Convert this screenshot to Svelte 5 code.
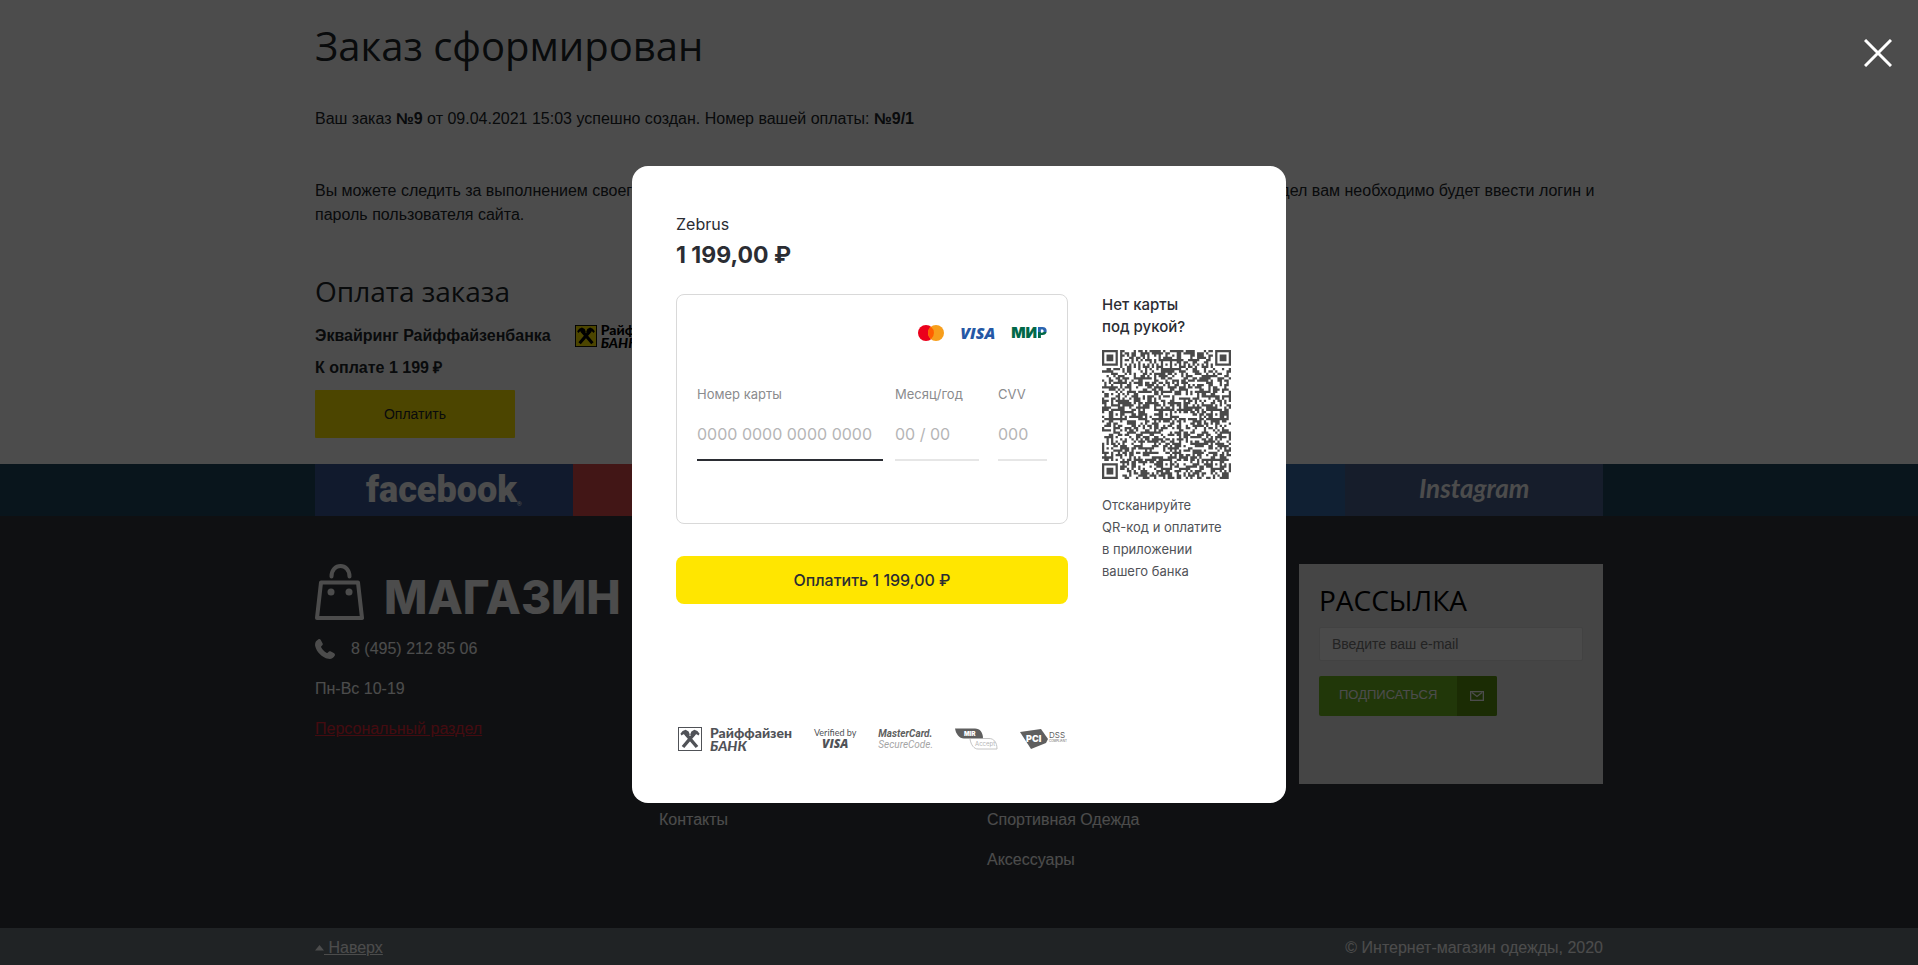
<script lang="ts">
    const socials = [
        { id: "facebook", label: "facebook", color: "#3b5998" },
        { id: "google", label: "", color: "#dd4b4b" },
        { id: "twitter", label: "", color: "#2caae1" },
        { id: "vk", label: "", color: "#366bac" },
        { id: "instagram", label: "Instagram", color: "#4b628f" },
    ];

    const amount = "1\u00a0199,00\u00a0₽";

    let email: string = "";
    let cardNumber: string = "";
    let expiry: string = "";
    let cvv: string = "";
    let open: boolean = true;

    const SIZE = 57; // modules on each side of the QR code

    // Distance from a centre, counted in square rings
    function ring(x: number, y: number, cx: number, cy: number): number {
        return Math.max(Math.abs(x - cx), Math.abs(y - cy));
    }

    function isDark(x: number, y: number, noise: number): boolean {
        const finders = [[3, 3], [SIZE - 4, 3], [3, SIZE - 4]];
        for (const [cx, cy] of finders) {
            const d = ring(x, y, cx, cy);
            if (d <= 4) return d !== 2 && d !== 4;
        }
        for (const cx of [6, 28, 50]) {
            for (const cy of [6, 28, 50]) {
                if (cx !== 28 && cy !== 28 && cx + cy !== 100) continue;
                const d = ring(x, y, cx, cy);
                if (d <= 2) return d !== 1;
            }
        }
        if (x === 6 || y === 6) return (x + y) % 2 === 0; // Timing lines
        return noise > 0.48;
    }

    function buildQr(): string {
        let seed = 20219;
        let path = "";
        for (let y = 0; y < SIZE; y++) {
            for (let x = 0; x < SIZE; x++) {
                seed = (seed * 16807) % 2147483647;
                if (isDark(x, y, seed / 2147483647)) path += `M${x} ${y}h1v1h-1z`;
            }
        }
        return path;
    }

    const qrPath = buildQr();
</script>

{#snippet bankSign(back: string, ink: string)}
    <svg class="bank-sign" viewBox="0 0 24 24" aria-hidden="true">
        <rect x="0.5" y="0.5" width="23" height="23" fill={back} stroke={ink} />
        <path d="M5 20 16.6 6.4M19 20 7.4 6.4" stroke={ink} stroke-width="3.4" fill="none" />
        <path d="M2.4 6.8 4.6 4l3-1.2 3 1.6 1.2 3.2-2.4 3-2.6-3.2-1.5-.2-1.7 1.4zM21.6 6.8 19.4 4l-3-1.2-3 1.6-1.2 3.2 2.4 3 2.6-3.2 1.5-.2 1.7 1.4z" fill={ink} />
    </svg>
{/snippet}

<div class="page">
    <main class="container order">
        <h1>Заказ сформирован</h1>
        <p>Ваш заказ <b>№9</b> от 09.04.2021 15:03 успешно создан. Номер вашей оплаты: <b>№9/1</b></p>
        <p class="note">
            Вы можете следить за выполнением своего заказа в Персональном разделе сайта. Обратите внимание, что для входа
            в этот раздел вам необходимо будет ввести логин и пароль пользователя сайта.
        </p>
        <h2>Оплата заказа</h2>
        <div class="method">
            <b>Эквайринг Райффайзенбанка</b>
            <span class="bank">
                {@render bankSign("#fee600", "#000")}
                <span class="bank-name">Райффайзен<br /><i>БАНК</i></span>
            </span>
        </div>
        <b class="total">К оплате 1 199 ₽</b>
        <button class="pay-open" on:click={() => (open = true)}>Оплатить</button>
    </main>

    <nav class="socials">
        <div class="container social-row">
            {#each socials as social}
                <a href="#{social.id}" class="social {social.id}" style="background: {social.color}" aria-label={social.id}>
                    {social.label}{#if social.id === "facebook"}<small>®</small>{/if}
                </a>
            {/each}
        </div>
    </nav>

    <footer>
        <div class="container footer-grid">
            <div class="contacts">
                <a class="logo" href="#home">
                    <svg viewBox="0 0 49 56" width="49" height="56" fill="none" stroke="#fff" stroke-width="4" aria-hidden="true">
                        <path d="M6 18.5h37l4 35.5H2z" stroke-linejoin="round" />
                        <path d="M16.500 12.500c0-14 18-14 18 0" stroke-linecap="round" />
                        <circle cx="16" cy="28" r="3.500" fill="#fff" stroke="none" />
                        <circle cx="34" cy="28" r="3.500" fill="#fff" stroke="none" />
                    </svg>
                    <span>МАГАЗИН</span>
                </a>
                <div class="phone">
                    <svg viewBox="0 0 20 20" width="20" height="20" fill="#fff" aria-hidden="true">
                        <path d="M3.200.4C4.400-.3 5.200.1 5.900 1.300l1.600 2.900c.6 1.100.3 1.900-.7 2.600-.8.600-.9 1-.4 1.900 1.200 2.100 2.900 3.800 5 5 .8.400 1.300.3 1.800-.5.700-1 1.600-1.300 2.700-.7l2.800 1.600c1.200.7 1.600 1.500 1 2.700-1.200 2.500-3.600 3.500-6.500 3C7 18.500 1.300 12.500.2 6.900-.3 4 .8 1.600 3.200.4z" />
                    </svg>
                    8 (495) 212 85 06
                </div>
                <p>Пн-Вс 10-19</p>
                <a class="personal" href="#personal">Персональный раздел</a>
            </div>
            <ul>
                <li><a href="#contacts">Контакты</a></li>
            </ul>
            <ul>
                <li><a href="#sport">Спортивная Одежда</a></li>
                <li><a href="#accessories">Аксессуары</a></li>
            </ul>
            <form class="mailing" on:submit|preventDefault>
                <h3>РАССЫЛКА</h3>
                <input type="email" placeholder="Введите ваш e-mail" aria-label="E-mail" bind:value={email} />
                <button class="subscribe">
                    <span>ПОДПИСАТЬСЯ</span>
                    <span class="mail">
                        <svg viewBox="0 0 14 10" width="14" height="10" fill="none" stroke="#fff" stroke-width="1.300" aria-hidden="true">
                            <rect x="0.650" y="0.650" width="12.700" height="8.700" />
                            <path d="m2 1.500 5 4 5-4" />
                        </svg>
                    </span>
                </button>
            </form>
        </div>
        <div class="bottom">
            <div class="container bottom-row">
                <a href="#top">
                    <svg viewBox="0 0 9 6" width="9" height="6" aria-hidden="true"><path d="M0 5.500 4.500 0 9 5.500z" fill="#fff" /></svg>&nbsp;Наверх</a>
                <span>© Интернет-магазин одежды, 2020</span>
            </div>
        </div>
    </footer>
</div>

{#if open}
    <div class="overlay">
        <button class="close" aria-label="Закрыть" on:click={() => (open = false)}>
            <svg viewBox="0 0 28 28" width="28" height="28" stroke="#fff" stroke-width="3"><path d="M1 1l26 26M27 1 1 27" /></svg>
        </button>
        <div class="modal" role="dialog" aria-modal="true" aria-label="Zebrus">
            <div class="merchant">Zebrus</div>
            <div class="price">{amount}</div>
            <div class="columns">
                <form class="payment" on:submit|preventDefault>
                    <div class="card">
                        <div class="brands">
                            <svg viewBox="0 0 26 16" width="26" height="16" aria-label="Mastercard">
                                <circle cx="8" cy="8" r="8" fill="#eb001b" />
                                <circle cx="18" cy="8" r="8" fill="#f79e1b" />
                                <path d="M13 1.800a8 8 0 0 1 0 12.400 8 8 0 0 1 0-12.400z" fill="#ff5f00" />
                            </svg>
                            <span class="visa">VISA</span>
                            <span class="mir">МИ<span>Р</span></span>
                        </div>
                        <div class="fields">
                            <label>Номер карты<input class="active" placeholder="0000 0000 0000 0000" bind:value={cardNumber} /></label>
                            <label>Месяц/год<input placeholder="00 / 00" bind:value={expiry} /></label>
                            <label class="cvv">CVV<input placeholder="000" bind:value={cvv} /></label>
                        </div>
                    </div>
                    <button class="pay">Оплатить {amount}</button>
                </form>
                <aside>
                    <h4>Нет карты<br />под рукой?</h4>
                    <svg class="qr" viewBox="0 0 {SIZE} {SIZE}" role="img" aria-label="QR">
                        <path d={qrPath} fill="#4a4a4a" />
                    </svg>
                    <p>Отсканируйте<br />QR-код и оплатите<br />в приложении<br />вашего банка</p>
                </aside>
            </div>
            <div class="partners">
                <span class="bank grey">
                    {@render bankSign("#fff", "#505257")}
                    <span class="bank-name">Райффайзен<br /><i>БАНК</i></span>
                </span>
                <span class="verified">Verified by<b>VISA</b></span>
                <span class="secure"><b>MasterCard.</b>SecureCode.</span>
                <svg viewBox="0 0 43 22" width="43" height="22" aria-label="MIR Accept">
                    <path d="M0 .5h20c5 0 8 4 8 10H9C4 10.500 1 6 0 .5z" fill="#5f5f5f" />
                    <path d="M28 10.500h6c5 0 8 4 8 10.500H23c-4 0-7-4-8-10" fill="none" stroke="#c4c4c4" />
                    <text x="9" y="8" class="mir-mark">MIR</text>
                    <text x="20" y="18" class="mir-accept">Accept</text>
                </svg>
                <svg viewBox="0 0 48 20" width="48" height="20" aria-label="PCI DSS">
                    <path d="M0 3 21 0l7 10-2 4-15 6z" fill="#5f5f5f" />
                    <text x="6" y="13" class="pci">PCI</text>
                    <text x="29" y="9" class="dss">DSS</text>
                    <text x="29" y="13" class="compliant">COMPLIANT</text>
                </svg>
            </div>
        </div>
    </div>
{/if}

<style>
    :global(body) {
        margin: 0;
        background: #fff;
        color: #212529;
        font: 16px/24px "Liberation Sans", Arial, sans-serif;
    }

    h1, h2, h3, h4, p, ul {
        margin: 0;
        padding: 0;
        list-style: none;
    }

    button {
        border: 0;
        padding: 0;
        font-family: inherit;
        cursor: pointer;
    }

    .container {
        box-sizing: border-box;
        width: 100%;
        max-width: 1288px;
        margin: 0 auto;
    }

    /* Order page */
    .order {
        display: flex;
        flex-direction: column;
        align-items: flex-start;
        padding: 16px 0 26px;
    }

    h1, h2, h3 {
        font-family: "Open Sans", sans-serif;
        font-weight: 400;
    }

    h1 {
        margin-bottom: 31px;
        font-size: 40px;
        line-height: 60px;
    }

    h2 {
        margin: 44px 0 13px;
        font-size: 28px;
        line-height: 40px;
    }

    .note {
        margin-top: 48px;
    }

    .method {
        display: flex;
        align-items: center;
        gap: 24px;
        height: 24px;
        margin-bottom: 8px;
    }

    .bank {
        display: flex;
        align-items: center;
        gap: 4px;
        color: #000;
    }

    .bank-sign {
        width: 22px;
        height: 22px;
    }

    .bank-name {
        font: 900 14px/13px Lato, sans-serif;
    }

    .pay-open {
        width: 200px;
        height: 48px;
        margin-top: 10px;
        border-radius: 1px;
        background: #fee600;
        color: #212529;
        font-size: 14px;
    }

    /* Social links */
    .socials {
        background: #1f495f;
    }

    .social-row {
        display: grid;
        grid-template-columns: repeat(5, 1fr);
        height: 52px;
    }

    .social {
        display: flex;
        align-items: center;
        justify-content: center;
        color: #fff;
        text-decoration: none;
    }

    .facebook {
        font: 900 36px/52px Roboto, sans-serif;
    }

    .facebook small {
        align-self: flex-end;
        font: 6px/24px Roboto, sans-serif;
    }

    .instagram {
        font: italic 700 26px/48px Lato, cursive;
        align-items: flex-start;
    }

    /* Footer */
    footer {
        background: #33383d;
        color: #fff;
    }

    .footer-grid {
        display: grid;
        grid-template-columns: 344px 328px 1fr 304px;
        padding: 48px 0;
        height: 412px;
    }

    footer a {
        color: #fff;
        text-decoration: none;
    }

    .logo {
        display: flex;
        align-items: flex-end;
        gap: 20px;
        height: 56px;
        font: 800 46px/46px Inter, sans-serif;
    }

    .phone {
        display: flex;
        gap: 16px;
        height: 24px;
        margin: 17px 0 16px;
        align-items: center;
    }

    .contacts p {
        margin-bottom: 16px;
    }

    .contacts .personal {
        color: #e32636;
        text-decoration: underline;
    }

    footer ul {
        display: flex;
        flex-direction: column;
        gap: 16px;
        padding-top: 244px;
    }

    .mailing {
        box-sizing: border-box;
        height: 220px;
        padding: 16px 20px;
        background: #e6e6e6;
    }

    .mailing h3 {
        color: #000;
        font-size: 28px;
        line-height: 40px;
    }

    .mailing input {
        box-sizing: border-box;
        display: block;
        width: 100%;
        height: 34px;
        margin: 7px 0 15px;
        padding: 0 12px;
        border: 1px solid #dcdcdc;
        border-radius: 2px;
        background: #f8f8f8;
        font: 14px "Liberation Sans", Arial, sans-serif;
    }

    .mailing input::placeholder {
        color: #757575;
    }

    .subscribe {
        display: flex;
        height: 40px;
        border-radius: 2px;
        overflow: hidden;
        background: #70b820;
        color: #fff;
        font-size: 13px;
        line-height: 38px;
    }

    .subscribe span {
        padding: 0 20px;
    }

    .subscribe .mail {
        display: flex;
        align-items: center;
        height: 40px;
        padding: 0 13px;
        background: #5a9410;
    }

    .bottom {
        background: #6c767c;
    }

    .bottom-row {
        display: flex;
        justify-content: space-between;
        padding: 8px 0 5px;
    }

    .bottom-row a {
        text-decoration: underline;
    }

    .bottom-row svg {
        vertical-align: 2px;
    }

    /* Payment window */
    .overlay {
        position: fixed;
        inset: 0;
        display: flex;
        align-items: flex-start;
        justify-content: center;
        padding-top: 166px;
        background: rgba(0, 0, 0, 0.7);
    }

    .close {
        position: absolute;
        top: 39px;
        right: 26px;
        height: 28px;
        background: none;
    }

    .modal {
        box-sizing: border-box;
        width: 654px;
        padding: 46px 44px 50px;
        border-radius: 16px;
        background: #fff;
        color: #2b2d33;
        font-family: Inter, sans-serif;
    }

    .price {
        margin: 3px 0 23px;
        font-size: 23px;
        font-weight: 700;
        line-height: 32px;
    }

    .columns {
        display: grid;
        grid-template-columns: 392px 1fr;
        gap: 34px;
    }

    .card {
        box-sizing: border-box;
        height: 230px;
        padding: 30px 20px;
        border: 1px solid #d9d9d9;
        border-radius: 8px;
    }

    .brands {
        display: flex;
        align-items: center;
        justify-content: flex-end;
        gap: 16px;
        height: 16px;
    }

    .visa {
        color: #2558a5;
        font: italic 800 16px/16px "Open Sans", sans-serif;
    }

    .mir {
        color: #006848;
        font: 900 15px/16px Inter, sans-serif;
    }

    .mir span {
        background: linear-gradient(#2a65b0 50%, #006848 50%);
        background-clip: text;
        color: transparent;
    }

    .fields {
        display: grid;
        grid-template-columns: 186px 84px 1fr;
        gap: 12px;
        margin-top: 43px;
    }

    .fields label {
        color: #8a8b8e;
        font-size: 13px;
        line-height: 20px;
    }

    .fields .cvv {
        width: 49px;
        justify-self: end;
    }

    .fields input {
        box-sizing: border-box;
        display: block;
        width: 100%;
        height: 39px;
        margin-top: 18px;
        padding: 0 0 13px;
        border: 0;
        border-bottom: 2px solid #e6e6e6;
        outline: 0;
        background: none;
        font: 16px Inter, sans-serif;
    }

    .fields .active {
        border-color: #2b2d33;
    }

    .fields input::placeholder {
        color: #b5b5b6;
    }

    .pay {
        width: 100%;
        height: 48px;
        margin-top: 32px;
        border-radius: 8px;
        background: #ffe600;
        color: #2b2d33;
        font-size: 16px;
        font-weight: 500;
    }

    h4 {
        font-size: 15px;
        font-weight: 500;
        line-height: 22px;
    }

    .qr {
        display: block;
        width: 129px;
        height: 129px;
        margin: 12px 0 15px;
    }

    aside p {
        color: #505257;
        font-size: 13px;
        line-height: 22px;
    }

    .partners {
        display: flex;
        align-items: center;
        gap: 22px;
        height: 28px;
        margin-top: 121px;
        padding-left: 2px;
        color: #505257;
    }

    .partners b {
        display: block;
    }

    .grey {
        gap: 8px;
        color: #505257;
    }

    .grey .bank-sign {
        width: 24px;
        height: 24px;
    }

    .verified {
        text-align: center;
        font: 9px/10px Lato, sans-serif;
    }

    .verified b {
        font: italic 800 12px/12px "Open Sans", sans-serif;
    }

    .secure {
        color: #a5a5a5;
        font: italic 10px/11px Roboto, sans-serif;
    }

    .secure b {
        color: #5f5f5f;
    }

    .mir-mark {
        fill: #fff;
        font: 900 6px Inter, sans-serif;
    }

    .mir-accept {
        fill: #b5b5b6;
        font: 6px Inter, sans-serif;
    }

    .pci {
        fill: #fff;
        font: 900 9px Inter, sans-serif;
    }

    .dss {
        fill: #5f5f5f;
        font: 8px Inter, sans-serif;
    }

    .compliant {
        fill: #5f5f5f;
        font: 3px Inter, sans-serif;
    }
</style>
